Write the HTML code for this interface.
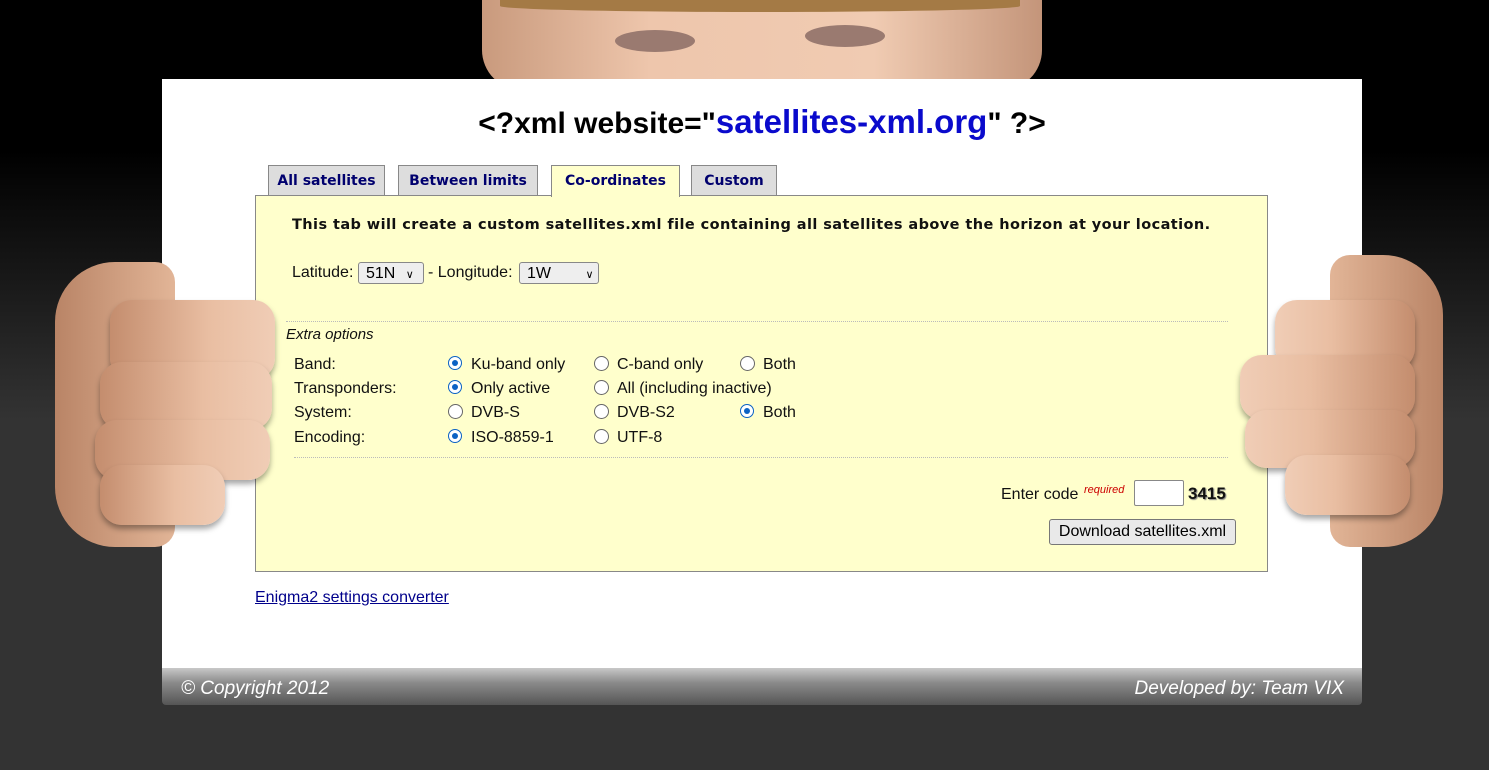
<!DOCTYPE html>
<html><head><meta charset="utf-8"><style>
body{margin:0;width:1489px;height:770px;overflow:hidden;background:linear-gradient(#000 0,#000 150px,#333 420px,#333 770px);font-family:"Liberation Sans",sans-serif;position:relative}
.abs{position:absolute}
.skin{position:absolute}
#card{position:absolute;left:162px;top:79px;width:1200px;height:589px;background:#fff}
#foot{position:absolute;left:162px;top:668px;width:1200px;height:37px;background:linear-gradient(#c8c8c8,#8a8a8a 40%,#555);border-radius:0 0 4px 4px;color:#fff;font-style:italic;font-size:19px}
h1{position:absolute;left:0;width:1200px;top:24px;margin:0;text-align:center;font-size:30px;font-weight:bold;color:#000}
h1 span{color:#0a0acc;font-size:33px}
.tab{position:absolute;top:86px;height:30px;border:1px solid #888;border-bottom:none;background:#ddd;color:#00006e;font-family:"DejaVu Sans",sans-serif;font-weight:bold;font-size:14px;line-height:30px;text-align:center;box-sizing:border-box}
#panel{position:absolute;left:93px;top:116px;width:1013px;height:377px;background:#ffffcc;border:1px solid #888;box-sizing:border-box}
.t{position:absolute;font-size:16px;color:#111}
.sel{position:absolute;height:22px;border:1px solid #888;border-radius:3px;background:#eee;font-size:16px;line-height:22px;padding-left:7px;box-sizing:border-box}
.r{position:absolute;width:13px;height:13px;border:1px solid #666;border-radius:50%;background:#fff}
.r.on{border:1.5px solid #0b62c4;width:12px;height:12px}
.r.on::after{content:"";position:absolute;left:3px;top:3px;width:6px;height:6px;border-radius:50%;background:#0b62c4}
.hr{position:absolute;border-top:1px dotted #bbb}
.f{position:absolute;border-radius:22px;background:linear-gradient(90deg,#c48d6e,#e9bea2 60%,#f0cdb6);box-shadow:0 4px 6px rgba(0,0,0,.35)}
.g{position:absolute;border-radius:22px;background:linear-gradient(270deg,#c48d6e,#e9bea2 60%,#f0cdb6);box-shadow:0 4px 6px rgba(0,0,0,.35)}
</style></head><body>
<div class="skin" style="left:482px;top:0;width:560px;height:90px;border-radius:0 0 40px 40px;background:linear-gradient(90deg,#c99a7d,#eec6ac 30%,#f0cbb2 70%,#c4957a)"></div>
<div class="abs" style="left:500px;top:0;width:520px;height:12px;background:#a47a45;border-radius:0 0 50% 50%"></div>
<div class="abs" style="left:615px;top:30px;width:80px;height:22px;border-radius:50%;background:#9a7a70"></div>
<div class="abs" style="left:805px;top:25px;width:80px;height:22px;border-radius:50%;background:#9a7a70"></div>
<div id="card">
<h1>&lt;?xml website="<span>satellites-xml.org</span>" ?&gt;</h1>
<div class="tab" style="left:106px;width:117px">All satellites</div>
<div class="tab" style="left:236px;width:140px">Between limits</div>
<div class="tab" style="left:389px;width:129px;background:#ffffcc;height:32px;z-index:2">Co-ordinates</div>
<div class="tab" style="left:529px;width:86px">Custom</div>
<div id="panel">
<div class="t" style="left:36px;top:21px;font-family:'DejaVu Sans',sans-serif;font-weight:bold;font-size:14.5px;letter-spacing:0.42px">This tab will create a custom satellites.xml file containing all satellites above the horizon at your location.</div>
<div class="t" style="left:36px;top:68px">Latitude:</div>
<div class="sel" style="left:102px;top:66px;width:66px">51N <span style="font-size:11px;margin-left:6px">&#8744;</span></div>
<div class="t" style="left:172px;top:68px">- Longitude:</div>
<div class="sel" style="left:263px;top:66px;width:80px">1W <span style="font-size:11px;margin-left:30px">&#8744;</span></div>
<div class="hr" style="left:30px;top:125px;width:942px"></div>
<div class="t" style="left:30px;top:130px;font-style:italic;font-size:15px">Extra options</div>
<div class="t" style="left:38px;top:160px">Band:</div>
<div class="t" style="left:38px;top:184px">Transponders:</div>
<div class="t" style="left:38px;top:208px">System:</div>
<div class="t" style="left:38px;top:233px">Encoding:</div>
<div class="r on" style="left:192px;top:160px"></div><div class="t" style="left:215px;top:160px">Ku-band only</div>
<div class="r" style="left:338px;top:160px"></div><div class="t" style="left:361px;top:160px">C-band only</div>
<div class="r" style="left:484px;top:160px"></div><div class="t" style="left:507px;top:160px">Both</div>
<div class="r on" style="left:192px;top:184px"></div><div class="t" style="left:215px;top:184px">Only active</div>
<div class="r" style="left:338px;top:184px"></div><div class="t" style="left:361px;top:184px">All (including inactive)</div>
<div class="r" style="left:192px;top:208px"></div><div class="t" style="left:215px;top:208px">DVB-S</div>
<div class="r" style="left:338px;top:208px"></div><div class="t" style="left:361px;top:208px">DVB-S2</div>
<div class="r on" style="left:484px;top:208px"></div><div class="t" style="left:507px;top:208px">Both</div>
<div class="r on" style="left:192px;top:233px"></div><div class="t" style="left:215px;top:233px">ISO-8859-1</div>
<div class="r" style="left:338px;top:233px"></div><div class="t" style="left:361px;top:233px">UTF-8</div>
<div class="hr" style="left:38px;top:261px;width:934px"></div>
<div class="t" style="left:745px;top:290px">Enter code</div>
<div class="t" style="left:828px;top:288px;font-size:11px;font-style:italic;color:#c00">required</div>
<div class="abs" style="left:878px;top:284px;width:50px;height:26px;background:#fff;border:1px solid #888;border-radius:2px;box-sizing:border-box"></div>
<div class="t" style="left:932px;top:288px;font-weight:bold;font-size:17px;text-shadow:1px 1px 1px #888">3415</div>
<div class="abs" style="left:793px;top:323px;width:187px;height:26px;border:1px solid #777;border-radius:3px;background:#e9e9e9;box-sizing:border-box;font-size:16px;line-height:24px;text-align:center">Download satellites.xml</div>
</div>
<div class="t" style="left:93px;top:510px;color:#00008b;text-decoration:underline">Enigma2 settings converter</div>
</div>
<div class="abs" style="left:55px;top:262px;width:120px;height:285px;border-radius:60px 20px 20px 60px;background:linear-gradient(90deg,#b98466,#e2b597)"></div>
<div class="f" style="left:110px;top:300px;width:165px;height:80px"></div>
<div class="f" style="left:100px;top:362px;width:172px;height:68px"></div>
<div class="f" style="left:95px;top:420px;width:175px;height:60px"></div>
<div class="f" style="left:100px;top:465px;width:125px;height:60px"></div>
<div class="abs" style="left:1330px;top:255px;width:113px;height:292px;border-radius:20px 60px 60px 20px;background:linear-gradient(270deg,#b98466,#e2b597)"></div>
<div class="g" style="left:1275px;top:300px;width:140px;height:70px"></div>
<div class="g" style="left:1240px;top:355px;width:175px;height:65px"></div>
<div class="g" style="left:1245px;top:410px;width:170px;height:58px"></div>
<div class="g" style="left:1285px;top:455px;width:125px;height:60px"></div>
<div id="foot"><span class="abs" style="left:19px;top:10px">© Copyright 2012</span><span class="abs" style="right:18px;top:10px">Developed by: Team VIX</span></div>
</body></html>
